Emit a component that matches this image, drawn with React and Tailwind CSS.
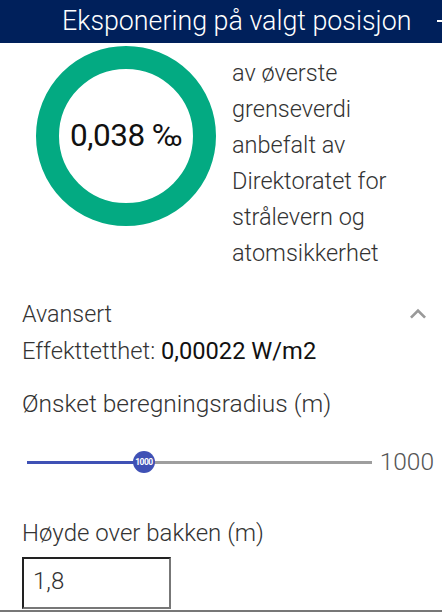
export default function App() {
  return (
    <div className="w-[442px] h-[612px] overflow-hidden bg-white font-['Roboto',sans-serif] text-[#333]">
      {/* title bar */}
      <div className="relative h-[43px] bg-[#00205b] flex items-center">
        <h1 className="pl-[62px] text-[26.8px] font-light text-white leading-none whitespace-nowrap">
          Eksponering på valgt posisjon
        </h1>
        <span className="absolute right-0 top-[20px] w-[5px] h-[2px] bg-white" />
      </div>

      {/* exposure gauge */}
      <div className="flex items-start pl-[36px] pt-[3px]">
        <div className="w-[180px] h-[180px] shrink-0 rounded-full border-[23px] border-[#03aa82] flex items-center justify-center">
          <span className="text-[31.5px] text-[#111] font-normal tracking-[-0.4px]">0,038 ‰</span>
        </div>
        <p className="ml-[16px] mt-[9px] text-[23.5px] font-light leading-[36px] text-[#333] whitespace-nowrap">
          av øverste
          <br />
          grenseverdi
          <br />
          anbefalt av
          <br />
          Direktoratet for
          <br />
          strålevern og
          <br />
          atomsikkerhet
        </p>
      </div>

      {/* advanced section */}
      <div className="pl-[22px] pr-[8px]">
        <div className="mt-[28px] flex items-center justify-between h-[30px]">
          <span className="text-[23.3px] font-light">Avansert</span>
          <svg width="32" height="32" viewBox="0 0 24 24" className="text-[#999]">
            <path d="M7.41 15.41 12 10.83l4.59 4.58L18 14l-6-6-6 6z" fill="currentColor" />
          </svg>
        </div>
        <div className="mt-[7px] text-[23.7px] font-light leading-[30px] whitespace-nowrap">
          Effekttetthet: <span className="font-normal text-[#111]">0,00022 W/m2</span>
        </div>

        <div className="mt-[23px] text-[24.5px] font-light leading-[30px] whitespace-nowrap">
          Ønsket beregningsradius (m)
        </div>

        {/* radius slider */}
        <div className="mt-[32px] flex items-center h-[22px]">
          <div className="relative ml-[5px] w-[351px] h-[3px] bg-[#9e9e9e]">
            <div className="absolute left-0 top-0 h-[3px] w-[117px] bg-[#3f51b5]" />
            <div className="absolute left-[106px] top-[-9.5px] w-[22px] h-[22px] rounded-full bg-[#3f51b5] flex items-center justify-center">
              <span className="text-[8.5px] font-bold text-white leading-none tracking-[-0.5px]">1000</span>
            </div>
          </div>
          <span className="ml-[8px] text-[24.5px] font-light text-[#555]">1000</span>
        </div>

        <div className="mt-[45px] text-[24px] font-light leading-[30px] whitespace-nowrap">
          Høyde over bakken (m)
        </div>
        <div className="mt-[9px] w-[149px] h-[52px] border-2 border-t-[#222] border-l-[#222] border-r-[#777] border-b-[#777] flex items-center pl-[9px] pb-[4px]">
          <span className="text-[24px] font-light text-[#333]">1,8</span>
        </div>
      </div>
      <div className="mt-[1px] h-[2px] bg-[#777]" />
    </div>
  );
}
